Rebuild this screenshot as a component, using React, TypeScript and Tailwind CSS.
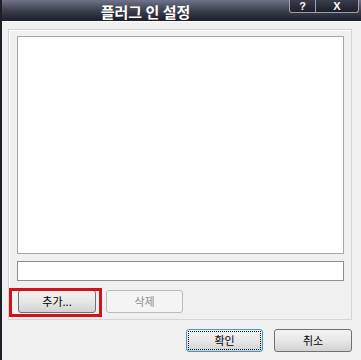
import React from 'react';

const font = { fontFamily: '"Noto Sans CJK KR", "Noto Sans", sans-serif' };

function Btn({ label, disabled, focused, className }: { label: string; disabled?: boolean; focused?: boolean; className?: string }) {
  const base = 'h-[23px] rounded-[3px] border text-[11px] flex items-center justify-center';
  if (disabled) {
    return (
      <div className={`${base} ${className} border-[#b8bcc0] bg-[#f4f4f4] text-[#8d8d8d]`}>{label}</div>
    );
  }
  return (
    <div
      className={`${base} ${className} ${focused ? 'border-[#3d9bc0]' : 'border-[#707070]'} bg-gradient-to-b from-[#f3f3f3] via-[#e8e8e8] to-[#d2d2d2] text-black p-[1px]`}
    >
      <div className={`w-full h-full flex items-center justify-center ${focused ? 'border border-dotted border-black' : ''}`}>
        {label}
      </div>
    </div>
  );
}

export default function App() {
  return (
    <div className="w-[361px] h-[360px] flex flex-col bg-[#f0f0f0] border-l-2 border-[#1e2029] overflow-hidden" style={font}>
      {/* title bar */}
      <div className="relative h-[21px] shrink-0 bg-gradient-to-b from-[#70748a] via-[#3d404f] to-[#1c1e29] flex items-center justify-center">
        <span className="text-white font-bold text-[15px] leading-none -ml-[72px] mt-[1px]">플러그 인 설정</span>
        <div className="absolute top-0 right-[2px] flex h-[13px] font-['Liberation_Sans',sans-serif]">
          <div className="w-[27px] h-full border border-t-0 border-[#9da1b0] rounded-bl-[3px] bg-gradient-to-b from-[#3a3d4c] to-[#1d1f2a] flex items-center justify-center text-white font-bold text-[11px] leading-[11px]">?</div>
          <div className="w-[43px] h-full border border-t-0 border-l-0 border-[#9da1b0] rounded-br-[3px] bg-gradient-to-b from-[#3a3d4c] to-[#1d1f2a] flex items-center justify-center text-white font-bold text-[11px] leading-[11px]">X</div>
        </div>
      </div>
      <div className="h-px bg-white shrink-0" />
      {/* body */}
      <div className="flex-1 flex flex-col pl-[6px] pt-[7px]">
        <div className="w-[344px] h-[291px] border border-[#d5d5d5] shadow-[inset_1px_1px_0_#ffffff] flex flex-col pl-[8px] pt-[6px]">
          <div className="w-[327px] h-[218px] bg-white border border-[#a5a5a5]" />
          <div className="w-[327px] h-[20px] mt-[7px] bg-white border border-[#8f8f8f]" />
          <div className="flex mt-[9px] pl-[1px] gap-[10px]">
            <div className="relative">
              <Btn label="추가..." className="w-[78px]" />
              <div className="absolute -left-[9px] -top-[2px] w-[93px] h-[29px] border-[3px] border-[#d0121b]" />
            </div>
            <Btn label="삭제" disabled className="w-[77px]" />
          </div>
        </div>
        <div className="flex justify-end w-[344px] mt-[9px] gap-[11px]">
          <Btn label="확인" focused className="w-[77px]" />
          <Btn label="취소" className="w-[78px]" />
        </div>
      </div>
    </div>
  );
}
